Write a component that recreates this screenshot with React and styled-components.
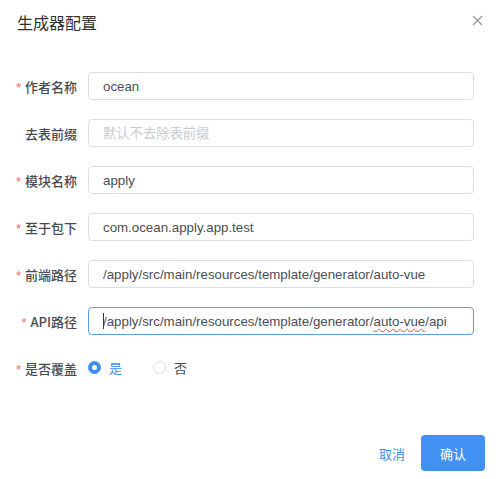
import React from "react";
import styled, { createGlobalStyle } from "styled-components";

const Global = createGlobalStyle`
  html, body { margin: 0; padding: 0; background: #fff; }
  body { font-family: "Liberation Sans", "Noto Sans CJK SC", sans-serif; }
  * { box-sizing: border-box; }
`;

const Dialog = styled.div`
  width: 499px;
  height: 479px;
  background: #fff;
  display: flex;
  flex-direction: column;
`;

const Header = styled.div`
  display: flex;
  align-items: center;
  justify-content: space-between;
  padding: 10px 16px 0 17px;
  height: 34px;
`;

const Title = styled.div`
  font-family: "Noto Sans CJK SC", sans-serif;
  font-size: 16px;
  line-height: 24px;
  color: #303133;
`;

const Close = styled.button`
  border: none;
  background: none;
  padding: 0;
  width: 12px;
  height: 12px;
  display: flex;
  align-items: center;
  justify-content: center;
  cursor: pointer;
  margin-top: -4px;
`;

const Form = styled.form`
  display: flex;
  flex-direction: column;
  gap: 19px;
  margin-top: 38px;
  padding-right: 25px;
`;

const Row = styled.div`
  display: flex;
  align-items: center;
  height: 28px;
`;

const Label = styled.label`
  width: 88px;
  padding-right: 11px;
  text-align: right;
  font-family: "Noto Sans CJK SC", sans-serif;
  font-size: 13px;
  font-weight: 500;
  color: #474b51;
  white-space: nowrap;
`;

const Star = styled.span`
  color: #f56c6c;
  margin-right: 4px;
  font-family: "Liberation Sans", sans-serif;
`;

const Input = styled.input`
  flex: 1;
  height: 28px;
  border: 1px solid #dcdfe6;
  border-radius: 4px;
  padding: 0 14px;
  font-family: "Liberation Sans", "Noto Sans CJK SC", sans-serif;
  font-size: 13.3px;
  color: #4a4e54;
  outline: none;
  background: #fff;
  &::placeholder { color: #c8cbd0; }
`;

const FocusField = styled.div`
  flex: 1;
  height: 28px;
  display: flex;
  align-items: center;
  border: 1px solid #5b9cf0;
  border-radius: 4px;
  padding: 0 14px;
  font-family: "Liberation Sans", sans-serif;
  font-size: 13.3px;
  color: #4a4e54;
  white-space: pre;
  overflow: hidden;
`;

const Caret = styled.span`
  display: inline-block;
  width: 1px;
  height: 16px;
  background: #333;
  margin-right: -1px;
`;

const Misspelled = styled.span`
  text-decoration-line: underline;
  text-decoration-style: wavy;
  text-decoration-color: #e5473d;
  text-decoration-thickness: 1px;
  text-underline-offset: 2px;
`;

const RadioGroup = styled.div`
  display: flex;
  align-items: center;
  gap: 31px;
  margin-top: -2px;
`;

const RadioItem = styled.label`
  display: flex;
  align-items: center;
  gap: 8px;
  font-family: "Noto Sans CJK SC", sans-serif;
  font-size: 13px;
  color: ${(p) => (p.$checked ? "#3f8ff3" : "#474b51")};
  cursor: pointer;
`;

const RadioDot = styled.span`
  width: 13px;
  height: 13px;
  border-radius: 50%;
  background: ${(p) => (p.$checked ? "#3f8ff3" : "#fff")};
  border: 1px solid ${(p) => (p.$checked ? "#3f8ff3" : "#dcdfe6")};
  display: flex;
  align-items: center;
  justify-content: center;
  &::after {
    content: "";
    width: 5px;
    height: 5px;
    border-radius: 50%;
    background: #fff;
    display: ${(p) => (p.$checked ? "block" : "none")};
  }
`;

const Footer = styled.div`
  margin-top: auto;
  display: flex;
  justify-content: flex-end;
  align-items: center;
  padding: 0 14px 8px 0;
`;

const Button = styled.button`
  height: 36px;
  width: ${(p) => (p.$primary ? "64px" : "auto")};
  padding: 0 ${(p) => (p.$primary ? "0" : "16px")};
  border: none;
  border-radius: 4px;
  background: ${(p) => (p.$primary ? "#4191f2" : "transparent")};
  color: ${(p) => (p.$primary ? "#fff" : "#3f8ff3")};
  font-family: "Noto Sans CJK SC", sans-serif;
  font-size: 13px;
  cursor: pointer;
`;

const fields = [
  { label: "作者名称", req: true, value: "ocean" },
  { label: "去表前缀", req: false, placeholder: "默认不去除表前缀" },
  { label: "模块名称", req: true, value: "apply" },
  { label: "至于包下", req: true, value: "com.ocean.apply.app.test" },
  { label: "前端路径", req: true, value: "/apply/src/main/resources/template/generator/auto-vue" },
];

export default function App() {
  return (
    <>
      <Global />
      <Dialog>
        <Header>
          <Title>生成器配置</Title>
          <Close aria-label="关闭">
            <svg width="11" height="11" viewBox="0 0 11 11">
              <path d="M1 1L10 10M10 1L1 10" stroke="#909399" strokeWidth="1.1" />
            </svg>
          </Close>
        </Header>
        <Form onSubmit={(e) => e.preventDefault()}>
          {fields.map((f) => (
            <Row key={f.label}>
              <Label>
                {f.req && <Star>*</Star>}
                {f.label}
              </Label>
              <Input defaultValue={f.value} placeholder={f.placeholder} spellCheck={false} />
            </Row>
          ))}
          <Row>
            <Label>
              <Star>*</Star>API路径
            </Label>
            <FocusField>
              <Caret />
              {"/apply/src/main/resources/template/generator/"}
              <Misspelled>auto-vue</Misspelled>
              {"/api"}
            </FocusField>
          </Row>
          <Row>
            <Label>
              <Star>*</Star>是否覆盖
            </Label>
            <RadioGroup>
              <RadioItem $checked>
                <RadioDot $checked />是
              </RadioItem>
              <RadioItem>
                <RadioDot />否
              </RadioItem>
            </RadioGroup>
          </Row>
        </Form>
        <Footer>
          <Button>取消</Button>
          <Button $primary>确认</Button>
        </Footer>
      </Dialog>
    </>
  );
}
